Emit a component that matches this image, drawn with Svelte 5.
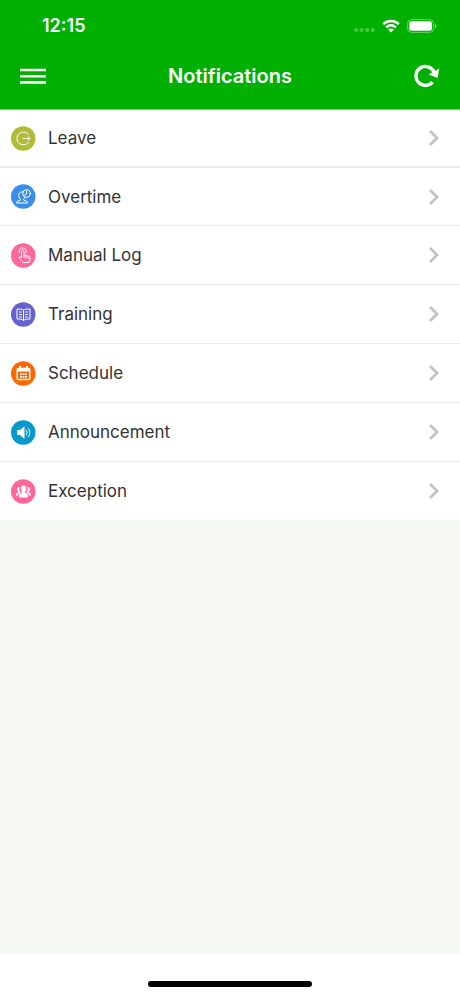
<script lang="ts">
  interface Category {
    id: string;
    label: string;
    color: string;
  }

  const categories: Category[] = [
    { id: 'leave', label: 'Leave', color: '#b0bd34' },
    { id: 'overtime', label: 'Overtime', color: '#3a8ee6' },
    { id: 'manual-log', label: 'Manual Log', color: '#ff6699' },
    { id: 'training', label: 'Training', color: '#6462cc' },
    { id: 'schedule', label: 'Schedule', color: '#ff6600' },
    { id: 'announcement', label: 'Announcement', color: '#0099cc' },
    { id: 'exception', label: 'Exception', color: '#ff6699' },
  ];
</script>

{#snippet glyph(id: string)}
  {#if id === 'leave'}
    <path class="line" d="M35 17A13 13 0 1 0 35 33M24 25H38M34 21l4 4-4 4" />
  {:else if id === 'overtime'}
    <circle class="line" cx="31" cy="19" r="7.5" />
    <path class="line" d="M31 14v6l-4 2" />
    <path class="line" d="M23 16c-6-1-9 4-7 10 1 3 3 4 3 6-4 2-8 2-8 6h22c0-4-4-4-8-6 0-2 2-3 3-5" />
  {:else if id === 'manual-log'}
    <path class="line" d="M21 29V17c0-4 5-4 5 0v8c1-2 4-2 4 1 1-2 4-1 4 1 1-2 4-1 4 2v4c0 3-2 4-2 6H24c-2-4-6-6-8-9-1-3 3-4 5-1zM26 25v4M30 26v4M34 27v4" />
    <path class="line" d="M17 20c-4-6 2-11 7-10 5 0 8 5 6 9" />
  {:else if id === 'training'}
    <path class="line" d="M25 16c-3-2-8-2-13-2v20c5 0 10 0 13 3 3-3 8-3 13-3V14c-5 0-10 0-13 2v21M17 20h4M17 25h4M17 30h4M29 20h4M29 25h4M29 30h4" />
  {:else if id === 'schedule'}
    <rect class="frame" x="12.500" y="15" width="25" height="22" rx="2" />
    <path class="fill" d="M12 14h26v7H12zM16 10h4v6h-4zM30 10h4v6h-4z" />
    <path class="fill" d="M18 25h4v3h-4zM23 25h4v3h-4zM28 25h4v3h-4zM18 30h4v3h-4zM23 30h4v3h-4zM28 30h4v3h-4z" />
  {:else if id === 'announcement'}
    <path class="fill" d="M12 20h6l9-8v26l-9-8h-6z" />
    <path class="line" d="M30 20c3 3 3 7 0 10M34 16c5 5 5 13 0 18" />
  {:else}
    <path class="fill" d="M25 13c4 0 6 3 5 8-1 3-2 4-2 6 3 2 6 2 6 7 0 2-1 3-3 3H19c-2 0-3-1-3-3 0-5 3-5 6-7 0-2-1-3-2-6-1-5 1-8 5-8z" />
    <path class="fill" d="M17 16c-4-1-6 3-4 7 1 2 2 3 1 4-3 1-4 2-4 6h4c1-4 3-5 5-6-2-4-3-7-2-11zM33 16c4-1 6 3 4 7-1 2-2 3-1 4 3 1 4 2 4 6h-4c-1-4-3-5-5-6 2-4 3-7 2-11z" />
  {/if}
{/snippet}

<div class="screen">
  <header class="header">
    <div class="status">
      <span class="time">12:15</span>
      <div class="indicators">
        <svg class="signal" viewBox="0 0 21 4" aria-hidden="true">
          <rect x="0" width="4" height="4" rx="1.4" />
          <rect x="5.6" width="4" height="4" rx="1.4" />
          <rect x="11.2" width="4" height="4" rx="1.4" />
          <rect x="16.8" width="4" height="4" rx="1.4" />
        </svg>
        <svg class="wifi" viewBox="0 0 18 14" aria-hidden="true">
          <path d="M1.2 5.1C5.8.9 12.2.9 16.8 5.1M4.1 8.4c3-2.600 6.800-2.600 9.800 0" />
          <path class="fill" d="M9 13.600l-3-3c1.700-1.500 4.300-1.500 6 0z" />
        </svg>
        <svg class="battery" viewBox="0 0 30 14" aria-hidden="true">
          <rect class="shell" x="0.6" y="0.6" width="26" height="12.8" rx="3.8" />
          <rect class="fill" x="2.3" y="2.3" width="22.600" height="9.400" rx="2" />
          <path class="tip" d="M28 4.800c2 .8 2 3.600 0 4.400z" />
        </svg>
      </div>
    </div>
    <div class="toolbar">
      <button type="button" class="icon-button" aria-label="Menu">
        <svg class="menu" viewBox="0 0 26 16"><path d="M0 2h26M0 8.200h26M0 14.400h26" /></svg>
      </button>
      <h1>Notifications</h1>
      <button type="button" class="icon-button" aria-label="Refresh">
        <svg class="refresh" viewBox="0 0 26 24">
          <path d="M18.600 18.200A9.500 9.500 0 1 1 20 7.800" />
          <path class="fill" d="M25.300 4.600l-1.700 9.400-9-3.600z" />
        </svg>
      </button>
    </div>
  </header>

  <main>
    <ul class="list">
      {#each categories as category (category.id)}
        <li>
          <a href="#{category.id}">
            <svg class="badge" viewBox="0 0 50 50" aria-hidden="true">
              <circle cx="24.500" cy="25" r="24.500" fill={category.color} />
              {@render glyph(category.id)}
            </svg>
            <span class="label">{category.label}</span>
            <svg class="chevron" viewBox="0 0 10 16" aria-hidden="true"><path d="M1 1l7 7-7 7" /></svg>
          </a>
        </li>
      {/each}
    </ul>
  </main>

  <footer><div class="home-bar"></div></footer>
</div>

<style>
  :global(body) {
    margin: 0;
  }
  .screen {
    display: flex;
    flex-direction: column;
    min-height: 100vh;
    background: #f7faf3;
    color: #333;
    font-family: Inter, 'Liberation Sans', sans-serif;
  }
  .header {
    background: #00b000;
    border-bottom: 1px solid #70d370;
    color: #fff;
  }
  .status {
    display: flex;
    align-items: center;
    justify-content: space-between;
    height: 51px;
    padding: 0 23px 0 42px;
  }
  .time {
    font-size: 18px;
    font-weight: 600;
  }
  .indicators {
    display: flex;
    align-items: center;
    gap: 7px;
  }
  .signal {
    width: 21px;
    height: 4px;
    margin-top: 9px;
    fill: #fff;
    opacity: 0.25;
  }
  .wifi {
    width: 18px;
    height: 14px;
    fill: none;
    stroke: #fff;
    stroke-width: 2.5;
  }
  .battery {
    width: 30px;
    height: 14px;
  }
  .shell {
    fill: none;
    stroke: #fff;
    stroke-opacity: 0.4;
  }
  .tip {
    fill: #fff;
    opacity: 0.5;
  }
  .fill {
    fill: #fff;
    stroke: none;
  }
  .toolbar {
    display: flex;
    align-items: center;
    justify-content: space-between;
    height: 50px;
    padding: 0 20px 8px;
  }
  h1 {
    margin: 0;
    font-size: 20px;
    font-weight: 600;
    line-height: 24px;
  }
  .icon-button {
    display: flex;
    padding: 0;
    border: 0;
    background: none;
    cursor: pointer;
  }
  .menu {
    width: 26px;
    height: 16px;
    fill: none;
    stroke: #fff;
    stroke-width: 2.6;
  }
  .refresh {
    width: 26px;
    height: 24px;
    fill: none;
    stroke: #fff;
    stroke-width: 3.4;
  }
  main {
    flex: 1;
  }
  .list {
    margin: 0;
    padding: 0;
    list-style: none;
    background: #fff;
  }
  li {
    display: flex;
    box-sizing: border-box;
    height: 59px;
    border-bottom: 1px solid #ebebeb;
  }
  li:nth-child(-n + 2) {
    height: 58px;
  }
  li:first-child {
    border-bottom-width: 2px;
  }
  li:last-child {
    height: 58px;
    border-bottom: none;
  }
  a {
    display: flex;
    flex: 1;
    align-items: center;
    gap: 12px;
    padding: 0 21px 0 11px;
    color: inherit;
    text-decoration: none;
  }
  .badge {
    width: 25px;
    height: 25px;
  }
  .badge .line {
    fill: none;
    stroke: #fff;
    stroke-width: 2;
    stroke-linecap: round;
    stroke-linejoin: round;
  }
  .badge .frame {
    fill: none;
    stroke: #fff;
    stroke-width: 3;
  }
  .label {
    flex: 1;
    font-size: 17px;
    line-height: 24px;
  }
  .chevron {
    width: 10px;
    height: 16px;
    fill: none;
    stroke: #c4c4c4;
    stroke-width: 2.8;
  }
  footer {
    display: flex;
    align-items: flex-end;
    justify-content: center;
    height: 33px;
    padding-bottom: 9px;
    background: #fff;
  }
  .home-bar {
    width: 164px;
    height: 6px;
    border-radius: 3px;
    background: #000;
  }
</style>
